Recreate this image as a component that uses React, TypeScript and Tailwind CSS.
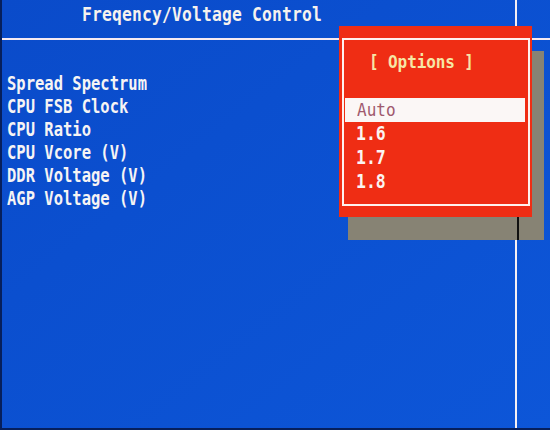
const settings = [
  "Spread Spectrum",
  "CPU FSB Clock",
  "CPU Ratio",
  "CPU Vcore (V)",
  "DDR Voltage (V)",
  "AGP Voltage (V)",
];

const options = ["Auto", "1.6", "1.7", "1.8"];
const selected = 0;

const mono = "font-['DejaVu_Sans_Mono','Liberation_Mono',monospace]";

function OptionsPopup() {
  return (
    <div className="absolute left-[337px] top-[26px] w-[193px] h-[191px]">
      {/* drop shadow, the divider line shows dark through it */}
      <div className="absolute left-[9px] top-[25px] w-[196px] h-[189px] bg-[#878374]">
        <div className="absolute left-[169px] top-0 bottom-0 w-[2px] bg-[#111]" />
      </div>
      <div className="relative h-full bg-[#ef2d14] pl-[3px] pr-[2px] pt-[12px] pb-[11px]">
        <div className="h-full border-2 border-[#fff2ee] px-[1px] pt-[10px]">
          <div
            className={`${mono} h-[24px] leading-[24px] pl-[24px] text-[16px] font-bold tracking-[-0.1px] text-[#f6e6a6] whitespace-pre scale-y-[1.15]`}
          >
            [ Options ]
          </div>
          <div className="mt-[24px] pr-[2px]">
            {options.map((opt, i) =>
              i === selected ? (
                <div
                  key={opt}
                  className={`${mono} h-[24px] leading-[24px] pl-[12px] bg-[#fbf7f6] text-[16px] text-[#a05a6e]`}
                >
                  <span className="inline-block scale-y-[1.1]">{opt}</span>
                </div>
              ) : (
                <div
                  key={opt}
                  className={`${mono} h-[24px] leading-[24px] pl-[11px] text-[16.5px] font-bold text-[#fbf4f2]`}
                >
                  <span className="inline-block scale-y-[1.15]">{opt}</span>
                </div>
              )
            )}
          </div>
        </div>
      </div>
    </div>
  );
}

export default function App() {
  return (
    <div className="relative w-[550px] h-[430px] overflow-hidden bg-gradient-to-br from-[#0a4bca] to-[#0d56d8] border-l-2 border-b-2 border-[#061f5c]">
      <div className="flex flex-col h-full">
        {/* header */}
        <div className="flex h-[38px] shrink-0">
          <div className="w-[515px] border-r-2 border-[#f4eef4] flex items-center pl-[80px]">
            <span
              className={`${mono} inline-block text-[16.3px] font-bold tracking-[0.2px] text-[#f6f2ee] leading-none -mt-[7px] scale-y-[1.2]`}
            >
              Freqency/Voltage Control
            </span>
          </div>
        </div>
        <div className="h-[2px] shrink-0 bg-[#f6eaf2]" />

        {/* item list */}
        <div className="flex flex-1">
          <div className="w-[515px] border-r-2 border-[#f6f0f4] pt-[33px] pl-[5px]">
            {settings.map((s) => (
              <div
                key={s}
                className={`${mono} h-[23px] leading-[23px] text-[15.5px] font-bold text-[#f6f4f4] whitespace-pre`}
              >
                <span className="inline-block scale-y-[1.2]">{s}</span>
              </div>
            ))}
          </div>
        </div>
      </div>

      <OptionsPopup />
    </div>
  );
}
